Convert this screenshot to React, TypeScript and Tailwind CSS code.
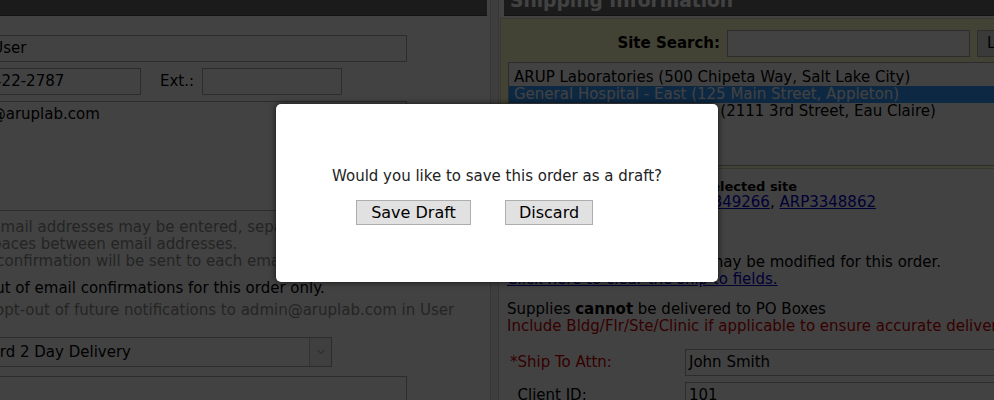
import { useLayoutEffect, useRef, type ReactNode } from "react";
import { ChevronDown } from "lucide-react";

const box = "border border-[#a9a9a9] bg-white px-[3px] flex items-center whitespace-nowrap overflow-hidden";
const link = "text-[#0000cc] underline";

function Header({ title, className = "" }: { title: string; className?: string }) {
  return (
    <div
      className={`h-[30px] bg-[#6a6a6a] border-b border-[#4d4d4d] pl-[6px] text-white font-bold text-[18.67px] leading-[30px] whitespace-nowrap overflow-hidden ${className}`}
    >
      {title}
    </div>
  );
}

function Row({ label, className = "", children }: { label?: ReactNode; className?: string; children: ReactNode }) {
  return (
    <div className={`flex items-center ${className}`}>
      <div className="w-[114px] shrink-0 pr-2 text-right text-[#cc0000] whitespace-nowrap">{label}</div>
      {children}
    </div>
  );
}

const sites = [
  { name: "ARUP Laboratories (500 Chipeta Way, Salt Lake City)", selected: false },
  { name: "General Hospital - East (125 Main Street, Appleton)", selected: true },
  { name: "General Hospital - Western (2111 3rd Street, Eau Claire)", selected: false },
];

function OrderForm() {
  return (
    <div className="flex w-[1230px] min-h-[640px] items-stretch">
      {/* ordering contact */}
      <div className="w-[651px] shrink-0 border-r border-[#d0d0d0]">
        <Header title="Order Contact" className="w-[647px]" />
        <Row label="*Name:" className="mt-[19px]">
          <div className={`${box} h-[27px] w-[453px]`}>Test User</div>
        </Row>
        <Row label="*Phone:" className="mt-[6px]">
          <div className={`${box} h-[27px] w-[187px]`}>801-422-2787</div>
          <span className="ml-[19px]">Ext.:</span>
          <div className={`${box} ml-[8px] h-[27px] w-[140px]`}></div>
        </Row>
        <div className="mt-[6px] flex">
          <div className="w-[114px] shrink-0 pr-2 pt-[4px] text-right">Email:</div>
          <div className="h-[110px] w-[453px] border border-[#a9a9a9] bg-white px-[3px] pt-[4px]">user@aruplab.com</div>
        </div>
        <div className="mt-[8px] ml-[87px] text-[#8c8c8c] whitespace-nowrap">
          <div>Multiple email addresses may be entered, separated by a comma.</div>
          <div>Add no spaces between email addresses.</div>
          <div>An order confirmation will be sent to each email address.</div>
        </div>
        <Row className="mt-[10px]" label={<span className="inline-block h-[13px] w-[13px] border border-[#a9a9a9] align-middle" />}>
          <span className="whitespace-nowrap">Opt out of email confirmations for this order only.</span>
        </Row>
        <div className="mt-[5px] ml-[87px] w-[530px] overflow-hidden text-[15px] leading-[16px] text-[#8c8c8c] whitespace-nowrap">
          You may opt-out of future notifications to admin@aruplab.com in User Preferences.
        </div>
        <Row label="*Delivery:" className="mt-[19px]">
          <div className="-ml-[11px] flex h-[30px] w-[389px] items-center border border-[#a9a9a9] bg-white">
            <span className="flex-1 px-[3px] whitespace-nowrap">Standard 2 Day Delivery</span>
            <span className="flex h-full w-[22px] items-center justify-center border-l border-[#c4c4c4] bg-[#f2f2f2]">
              <ChevronDown size={12} strokeWidth={1.5} color="#666" />
            </span>
          </div>
        </Row>
        <Row label="Comments:" className="mt-[9px]">
          <div className={`${box} h-[27px] w-[453px]`}></div>
        </Row>
      </div>

      <div className="w-[7px] shrink-0 bg-[#eeeeee]" />

      {/* shipping information */}
      <div className="w-[560px] shrink-0 border-l border-[#d0d0d0]">
        <Header title="Shipping Information" className="ml-[5px]" />
        <div className="mt-[2px] ml-px border border-[#d8d8a6] bg-[#ffffcc] px-[7px] pt-[11px] pb-[2px]">
          <div className="flex items-center">
            <span className="w-[212px] shrink-0 text-right font-bold">Site Search:</span>
            <div className={`${box} ml-[7px] h-[27px] w-[243px] shrink-0`}></div>
            <button className="ml-[7px] h-[27px] shrink-0 border border-[#adadad] bg-[#e1e1e1] px-[9px] text-[15px]">
              Lookup
            </button>
          </div>
          <div className="mt-[5px] h-[104px] overflow-hidden border border-[#a9a9a9] bg-white pt-[6px]">
            {sites.map((site) => (
              <div
                key={site.name}
                className={`h-[17px] px-[5px] whitespace-nowrap ${site.selected ? "bg-[#3399ff] text-white" : ""}`}
              >
                {site.name}
              </div>
            ))}
          </div>
        </div>

        <div className="pl-[8px] whitespace-nowrap">
          <div className="mt-[10px] text-[13px] leading-[15px] font-bold">Draft orders saved for the selected site</div>
          <div>
            Orders: <a className={link}>ARP3351024</a>, <a className={link}>ARP3349266</a>,{" "}
            <a className={link}>ARP3348862</a>
          </div>
          <div className="mt-[43px]">The ship-to address below may be modified for this order.</div>
          <a className={link}>Click here to clear the ship to fields.</a>
          <div className="mt-[13px]">
            Supplies <b>cannot</b> be delivered to PO Boxes
          </div>
          <div className="text-[#cc0000]">Include Bldg/Flr/Ste/Clinic if applicable to ensure accurate delivery.</div>

          <div className="mt-[14px] flex items-center">
            <span className="w-[178px] shrink-0 pl-[3px] text-[#cc0000]">*Ship To Attn:</span>
            <div className={`${box} h-[27px] w-[330px]`}>John Smith</div>
          </div>
          <div className="mt-[6px] flex items-center">
            <span className="w-[178px] shrink-0 pl-[3px]">
              <span className="invisible">*</span>Client ID:
            </span>
            <div className={`${box} h-[27px] w-[330px]`}>101</div>
          </div>
        </div>
      </div>
    </div>
  );
}

export default function App() {
  const pageRef = useRef<HTMLDivElement>(null);

  useLayoutEffect(() => {
    if (pageRef.current) {
      pageRef.current.scrollLeft = 160;
      pageRef.current.scrollTop = 14;
    }
  }, []);

  return (
    <div className="relative h-[400px] w-[994px] overflow-hidden font-['DejaVu_Sans',sans-serif] text-[15px] leading-[17px] text-black">
      <div ref={pageRef} className="h-[400px] w-[994px] overflow-hidden bg-white">
        <OrderForm />
      </div>

      {/* modal backdrop */}
      <div className="absolute inset-0 z-10 bg-[rgba(0,0,0,0.74)]" />

      {/* save-draft prompt */}
      <div className="absolute inset-0 z-20 flex justify-center pt-[104px]">
        <div className="h-[178px] w-[442px] rounded-[5px] bg-white pt-[64px] text-center text-[#222] shadow-[0_0_6px_rgba(0,0,0,0.7)]">
          <div className="leading-[16px]">Would you like to save this order as a draft?</div>
          <div className="mt-[16px] flex justify-center gap-[34px] pr-[45px]">
            <button className="h-[25px] w-[115px] border border-[#adadad] bg-[#e1e1e1] text-[16px] leading-none text-black">
              Save Draft
            </button>
            <button className="h-[25px] w-[88px] border border-[#adadad] bg-[#e1e1e1] text-[16px] leading-none text-black">
              Discard
            </button>
          </div>
        </div>
      </div>
    </div>
  );
}
